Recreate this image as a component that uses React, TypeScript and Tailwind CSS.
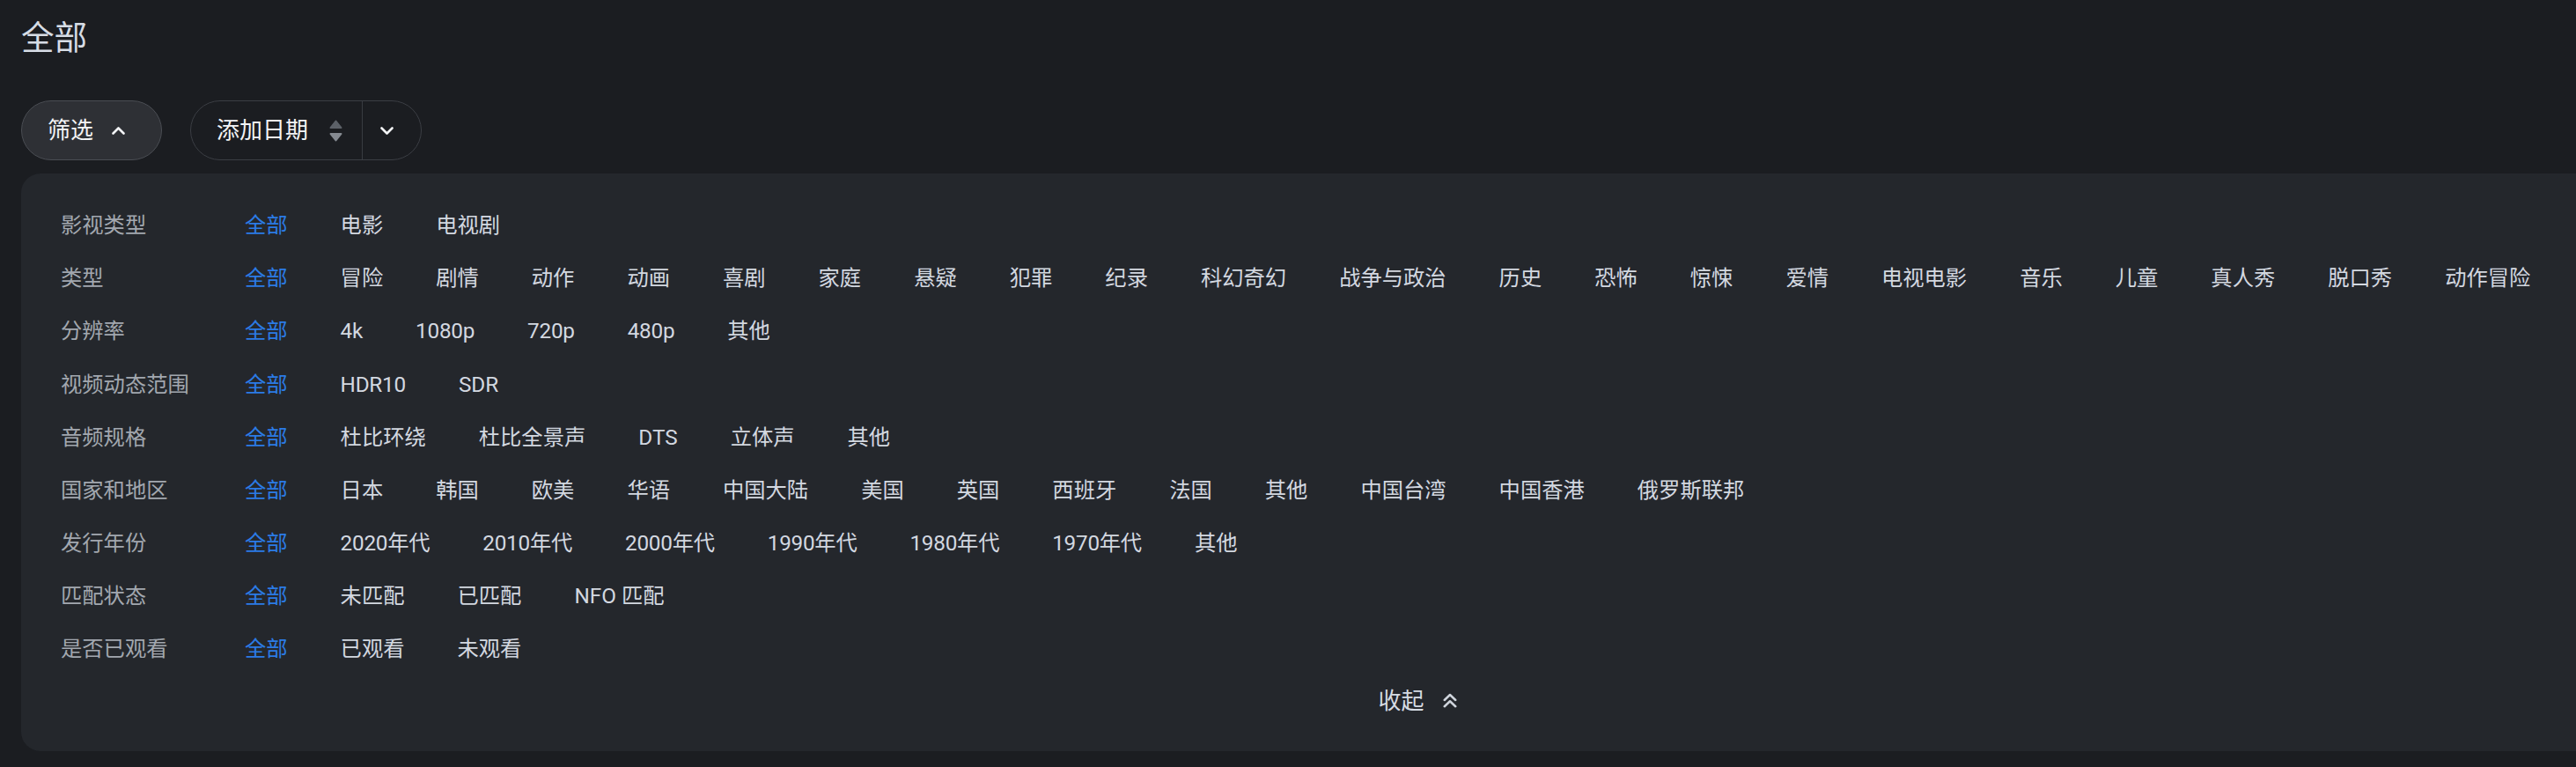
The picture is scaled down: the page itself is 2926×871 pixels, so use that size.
import React from "react";

const rows: [string, string[]][] = [
  ["影视类型", ["电影", "电视剧"]],
  [
    "类型",
    [
      "冒险", "剧情", "动作", "动画", "喜剧", "家庭", "悬疑", "犯罪", "纪录", "科幻奇幻",
      "战争与政治", "历史", "恐怖", "惊悚", "爱情", "电视电影", "音乐", "儿童", "真人秀",
      "脱口秀", "动作冒险",
    ],
  ],
  ["分辨率", ["4k", "1080p", "720p", "480p", "其他"]],
  ["视频动态范围", ["HDR10", "SDR"]],
  ["音频规格", ["杜比环绕", "杜比全景声", "DTS", "立体声", "其他"]],
  [
    "国家和地区",
    ["日本", "韩国", "欧美", "华语", "中国大陆", "美国", "英国", "西班牙", "法国", "其他", "中国台湾", "中国香港", "俄罗斯联邦"],
  ],
  ["发行年份", ["2020年代", "2010年代", "2000年代", "1990年代", "1980年代", "1970年代", "其他"]],
  ["匹配状态", ["未匹配", "已匹配", "NFO 匹配"]],
  ["是否已观看", ["已观看", "未观看"]],
];

function ChevronUp() {
  return (
    <svg width="15" height="9" viewBox="0 0 15 9" fill="none">
      <path d="M1.5 7.5 L7.5 1.5 L13.5 7.5" stroke="#f2f3f5" strokeWidth="2.6" strokeLinecap="round" strokeLinejoin="round" />
    </svg>
  );
}

function ChevronDown() {
  return (
    <svg width="15" height="9" viewBox="0 0 15 9" fill="none">
      <path d="M1.5 1.5 L7.5 7.5 L13.5 1.5" stroke="#f2f3f5" strokeWidth="2.6" strokeLinecap="round" strokeLinejoin="round" />
    </svg>
  );
}

function SortIcon() {
  return (
    <svg width="15" height="25" viewBox="0 0 15 25" fill="none">
      <path d="M7.5 1.5 L13.5 9 L1.5 9 Z" fill="#5c6168" stroke="#5c6168" strokeWidth="2" strokeLinejoin="round" />
      <path d="M1.5 16 L13.5 16 L7.5 23.5 Z" fill="#858a91" stroke="#858a91" strokeWidth="2" strokeLinejoin="round" />
    </svg>
  );
}

function ChevronsUp() {
  return (
    <svg width="16" height="17" viewBox="0 0 16 17" fill="none">
      <path d="M1.75 8 L8 2 L14.25 8" stroke="#cfd4dc" strokeWidth="2.5" strokeLinecap="round" strokeLinejoin="round" />
      <path d="M1.75 15.25 L8 9.25 L14.25 15.25" stroke="#cfd4dc" strokeWidth="2.5" strokeLinecap="round" strokeLinejoin="round" />
    </svg>
  );
}

export default function App() {
  return (
    <div className="w-screen min-h-screen overflow-hidden bg-[#1b1d21] font-['Roboto','Noto_Sans_CJK_SC',sans-serif]">
      <div className="pl-[24px]">
        <div className="h-[88px] flex items-center">
          <h1 className="text-[37.5px] leading-none text-[#d6dce5] font-normal">全部</h1>
        </div>

        <div className="mt-[26px] flex items-center gap-[32px] h-[68px]">
          <button className="h-[68px] w-[160px] rounded-full border border-[#4a4d53] bg-[#2e3035] flex items-center pl-[29px] gap-[21px] text-[26px] leading-none text-[#f3f4f6]">
            <span>筛选</span>
            <ChevronUp />
          </button>

          <div className="h-[68px] w-[263px] rounded-full border border-[#3b3e44] bg-[#1b1d21] flex items-stretch text-[26px] leading-none text-[#f3f4f6]">
            <div className="flex items-center pl-[29px] pr-[22px] gap-[24px]">
              <span>添加日期</span>
              <SortIcon />
            </div>
            <div className="w-px bg-[#383b41]" />
            <div className="flex items-center pl-[20px] pr-[30px]">
              <ChevronDown />
            </div>
          </div>
        </div>

        <div className="mt-[15px] w-[3172px] rounded-[22px] bg-[#24272c] pt-[29px] pb-[29px]">
          <div className="pl-[45px] flex flex-col">
            {rows.map(([label, items]) => (
              <div key={label} className="h-[60.2px] flex items-center whitespace-nowrap text-[24.3px] leading-none">
                <div className="w-[209px] shrink-0 text-[#a2a7af]">{label}</div>
                <div className="flex items-center gap-[60px]">
                  <span className="text-[#2b7be6]">全部</span>
                  {items.map((it, i) => (
                    <span
                      key={i}
                      className={/\d/.test(it) ? "text-[#d3d8e0] tracking-[-0.25px]" : "text-[#d3d8e0]"}
                    >
                      {it}
                    </span>
                  ))}
                </div>
              </div>
            ))}
          </div>
          <div className="h-[56px] flex items-center justify-center gap-[21px]">
            <span className="text-[26px] leading-none text-[#d6dbe3]">收起</span>
            <ChevronsUp />
          </div>
        </div>
      </div>
    </div>
  );
}
